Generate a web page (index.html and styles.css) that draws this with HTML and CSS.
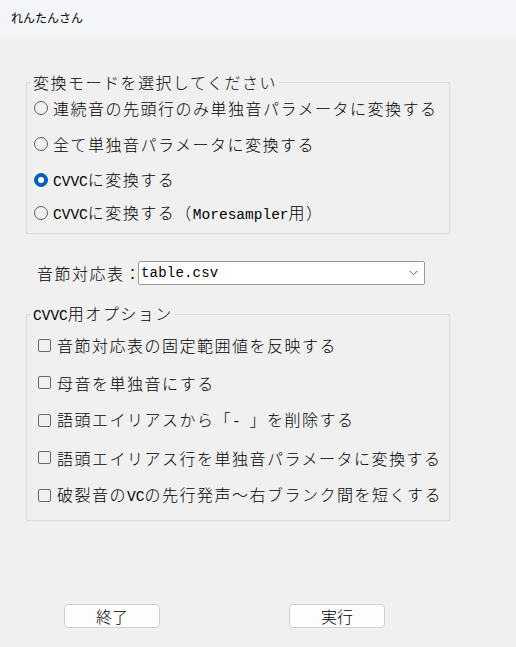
FILE: index.html
```html
<!DOCTYPE html>
<html lang="ja">
<head>
<meta charset="utf-8">
<title>れんたんさん</title>
<link rel="stylesheet" href="styles.css">
</head>
<body>
<div class="titlebar">れんたんさん</div>
<main class="content">
  <fieldset class="group g1">
    <legend>変換モードを選択してください</legend>
    <label class="opt"><span class="radio"></span><span>連続音の先頭行のみ単独音パラメータに変換する</span></label>
    <label class="opt"><span class="radio"></span><span>全て単独音パラメータに変換する</span></label>
    <label class="opt"><span class="radio on"></span><span><span class="lat">CVVC</span>に変換する</span></label>
    <label class="opt"><span class="radio"></span><span><span class="lat">CVVC</span>に変換する（<span class="lat">Moresampler</span>用）</span></label>
  </fieldset>

  <div class="combo-row">
    <span class="combo-label">音節対応表：</span>
    <div class="combo">
      <span class="lat">table.csv</span>
      <svg class="chev" width="9" height="6" viewBox="0 0 9 6"><polyline points="0.5,0.8 4.5,4.8 8.5,0.8" fill="none" stroke="#606060" stroke-width="1"/></svg>
    </div>
  </div>

  <fieldset class="group g2">
    <legend><span class="lat">CVVC</span>用オプション</legend>
    <label class="opt"><span class="check"></span><span>音節対応表の固定範囲値を反映する</span></label>
    <label class="opt"><span class="check"></span><span>母音を単独音にする</span></label>
    <label class="opt"><span class="check"></span><span>語頭エイリアスから「<span class="lat">- </span>」を削除する</span></label>
    <label class="opt"><span class="check"></span><span>語頭エイリアス行を単独音パラメータに変換する</span></label>
    <label class="opt"><span class="check"></span><span>破裂音の<span class="lat">VC</span>の先行発声〜右ブランク間を短くする</span></label>
  </fieldset>

  <div class="buttons">
    <button class="btn">終了</button>
    <button class="btn">実行</button>
  </div>
</main>
</body>
</html>
```
FILE: styles.css
```css
html, body {
  margin: 0;
  padding: 0;
}
body {
  width: 516px;
  height: 647px;
  overflow: hidden;
  background: #f0f0f0;
  color: #000;
  font-family: "Noto Sans CJK JP", "Noto Sans", sans-serif;
  font-weight: 300;
}
.titlebar {
  height: 36px;
  box-sizing: border-box;
  background: #f3f5f8;
  font-size: 12px;
  font-weight: 400;
  display: flex;
  align-items: center;
  padding-left: 11px;
  padding-bottom: 1px;
}
.content {
  padding: 37px 0 0 26px;
}
.group {
  margin: 0;
  width: 424px;
  box-sizing: border-box;
  border: 1px solid #dadada;
  padding: 7px 0 10px 0;
  min-width: 0;
}
.group legend {
  margin-left: 4px;
  padding: 0 2px;
  font-size: 16px;
  line-height: 18px;
  letter-spacing: 1.5px;
}
.opt {
  display: flex;
  align-items: center;
  height: 20px;
  font-size: 16px;
  line-height: 20px;
  letter-spacing: 1.5px;
  white-space: nowrap;
}
.lat {
  font-family: "Liberation Mono", "DejaVu Sans Mono", monospace;
  font-weight: 400;
  font-size: 14.5px;
  letter-spacing: 0;
  white-space: pre;
}
.g1 .opt + .opt {
  margin-top: 16px;
}
.g1 .opt:last-of-type {
  margin-top: 13px;
}
.radio {
  flex: none;
  box-sizing: border-box;
  width: 14px;
  height: 14px;
  border: 1px solid #5c5c5c;
  border-radius: 50%;
  margin: 0 5px 0 7px;
  display: grid;
  place-items: center;
}
.radio.on {
  background: #005fb8;
  border-color: #005fb8;
}
.radio.on::after {
  content: "";
  width: 6px;
  height: 6px;
  border-radius: 50%;
  background: #fff;
}
.combo-row {
  display: flex;
  align-items: center;
  margin-top: 27px;
}
.combo-label {
  margin-left: 11px;
  width: 101px;
  font-size: 16px;
  letter-spacing: 1.5px;
  white-space: nowrap;
}
.combo {
  width: 287px;
  height: 24px;
  box-sizing: border-box;
  border: 1px solid #9a9a9a;
  border-radius: 2px;
  background: #fff;
  display: flex;
  align-items: center;
  justify-content: space-between;
  padding: 0 6px 0 2px;
}
.combo .lat {
  font-size: 14px;
  letter-spacing: 0.2px;
}
.g2 {
  margin-top: 19px;
  padding: 10px 0 15px 0;
}
.g2 .opt + .opt {
  margin-top: 17.5px;
}
.check {
  flex: none;
  box-sizing: border-box;
  width: 13px;
  height: 13px;
  border: 1px solid #666;
  border-radius: 2px;
  margin: 0 6px 0 11px;
}
.buttons {
  display: flex;
  gap: 129px;
  margin-top: 83px;
  padding-left: 38px;
}
.btn {
  width: 96px;
  height: 24px;
  padding: 0;
  box-sizing: border-box;
  border: 1px solid #d0d0d0;
  border-radius: 4px;
  background: #fdfdfd;
  color: #000;
  font-family: "Noto Sans CJK JP", sans-serif;
  font-weight: 300;
  font-size: 16px;
  line-height: 22px;
}
```
